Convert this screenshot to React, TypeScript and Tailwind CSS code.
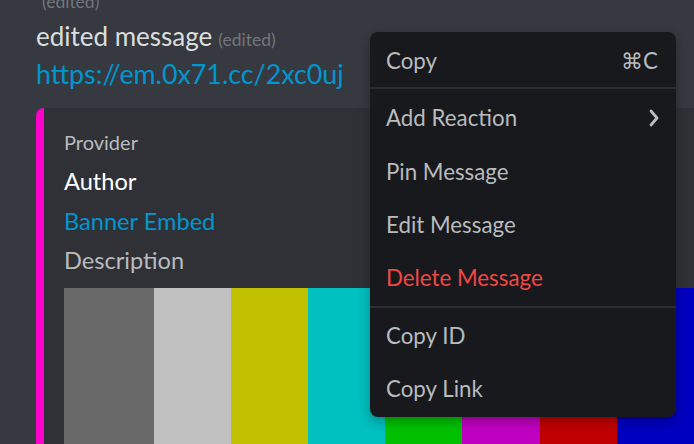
import React from "react";

const bars = [
  { c: "#686868", w: 90 },
  { c: "#c0c0c0", w: 77 },
  { c: "#c0c000", w: 77 },
  { c: "#00c0c0", w: 77 },
  { c: "#00c000", w: 77 },
  { c: "#c000c0", w: 78 },
  { c: "#c00000", w: 77 },
  { c: "#0000c0", w: 77 },
];

function MenuItem({ children, className = "", right }: { children: React.ReactNode; className?: string; right?: React.ReactNode }) {
  return (
    <div className={"h-[53px] flex items-center justify-between pl-[16px] pr-[18px] " + className}>
      <span>{children}</span>
      {right}
    </div>
  );
}

export default function App() {
  return (
    <div className="relative w-[694px] h-[444px] overflow-hidden bg-[#36393f] font-['Lato',sans-serif]">
      <div className="flex flex-col pl-[36px]">
        <div className="-mt-[21px] h-[38px] leading-[38px] text-[26px] text-[#dcddde] whitespace-nowrap">
          <span className="ml-[6px] text-[17.5px] text-[#72767d]">(edited)</span>
        </div>
        <div className="h-[38px] leading-[38px] text-[26px] text-[#dcddde] whitespace-nowrap">
          edited message<span className="ml-[6px] text-[17.5px] text-[#72767d]">(edited)</span>
        </div>
        <div className="h-[38px] leading-[38px] text-[26.8px] text-[#0096cf] whitespace-nowrap">
          https://em.0x71.cc/2xc0uj
        </div>
        <div className="mt-[15px] w-[700px] h-[400px] flex flex-col bg-[#2f3136] border-l-[8px] border-[#ff00cc] rounded-tl-[8px] pl-[20px] pt-[20px]">
          <div className="h-[28px] leading-[28px] text-[20px] text-[#b9bbbe]">Provider</div>
          <div className="mt-[6px] h-[39px] leading-[39px] text-[23.6px] text-white">Author</div>
          <div className="mt-[1px] h-[39px] leading-[39px] text-[23.6px] text-[#0096cf]">Banner Embed</div>
          <div className="h-[39px] leading-[39px] text-[23.6px] text-[#b9bbbe]">Description</div>
          <div className="mt-[8px] flex h-[200px]">
            {bars.map((b, i) => (
              <div key={i} className="h-full shrink-0" style={{ background: b.c, width: b.w }} />
            ))}
          </div>
        </div>
      </div>

      <div className="absolute left-[370px] top-[32px] w-[306px] h-[385px] bg-[#18191c] rounded-[8px] shadow-[0_4px_12px_rgba(0,0,0,0.3)] pt-[2px] text-[22.3px] text-[#b9bbbe] flex flex-col">
        <MenuItem right={<span className="text-[#b9bbbe]">⌘C</span>}>Copy</MenuItem>
        <div className="h-[2px] bg-[#2c2e32]" />
        <div className="h-[2px]" />
        <MenuItem
          right={
            <svg width="10" height="18" viewBox="0 0 10 18" className="-mr-[1px]">
              <polyline points="2,2 8,9 2,16" fill="none" stroke="#b9bbbe" strokeWidth="2.8" strokeLinecap="round" strokeLinejoin="round" />
            </svg>
          }
        >
          Add Reaction
        </MenuItem>
        <MenuItem className="mt-[1px]">Pin Message</MenuItem>
        <MenuItem>Edit Message</MenuItem>
        <MenuItem className="text-[#f04747]">Delete Message</MenuItem>
        <div className="mt-[2px] h-[2px] bg-[#2c2e32]" />
        <div className="h-[1px]" />
        <MenuItem>Copy ID</MenuItem>
        <MenuItem>Copy Link</MenuItem>
      </div>
    </div>
  );
}
